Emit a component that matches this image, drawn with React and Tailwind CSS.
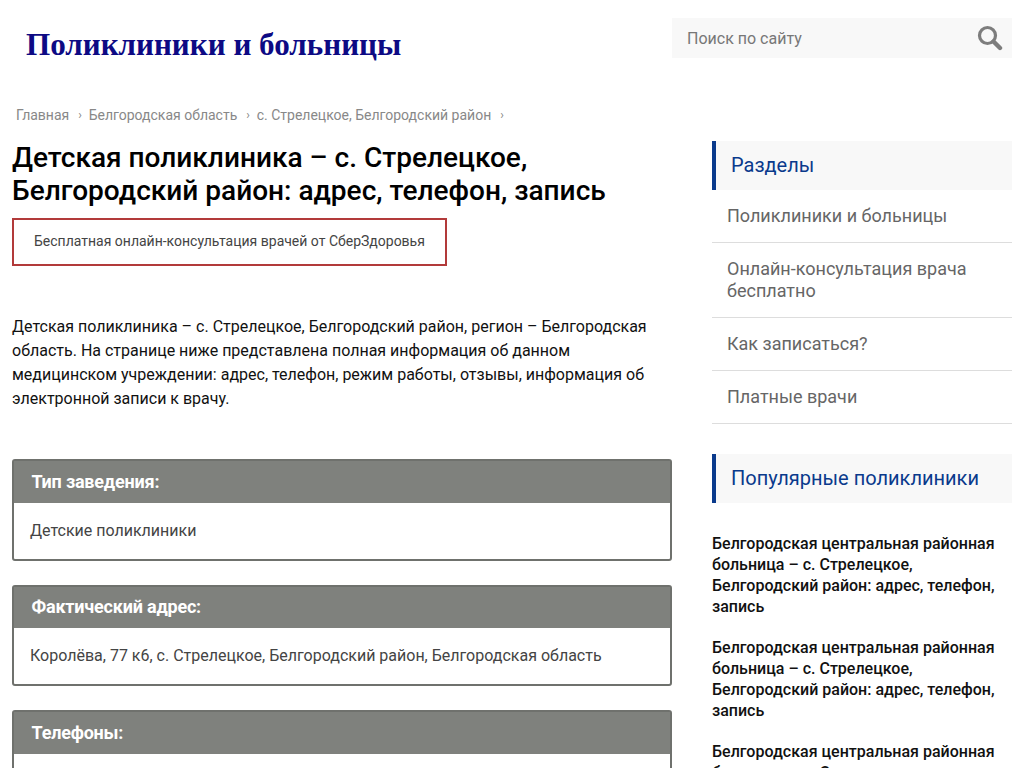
import React from "react";

const sections = ["Поликлиники и больницы", "Онлайн-консультация врача бесплатно", "Как записаться?", "Платные врачи"];
const popular = [
  "Белгородская центральная районная больница – с. Стрелецкое, Белгородский район: адрес, телефон, запись",
  "Белгородская центральная районная больница – с. Стрелецкое, Белгородский район: адрес, телефон, запись",
  "Белгородская центральная районная больница – с. Стрелецкое, Белгородский район: адрес, телефон, запись",
];
const crumbs = ["Главная", "Белгородская область", "с. Стрелецкое, Белгородский район"];

function InfoCard({ title, children }) {
  return (
    <div className="mb-[24px] rounded-[3px] border-2 border-[#6f716d] bg-white">
      <div className="flex h-[41.6px] items-center bg-[#7f817d] pb-[1.4px] pl-[17.5px] text-[18px] font-bold tracking-[-0.2px] text-white">{title}</div>
      <div className="flex h-[56px] items-center pl-[16px] text-[16px] text-[#444]">{children}</div>
    </div>
  );
}

function SideHeading({ children }) {
  return (
    <div className="flex h-[49px] items-center border-l-4 border-[#0a3a8c] bg-[#f8f8f8] pb-[1px] pl-[15px] text-[20px] text-[#0a3a8c]">
      {children}
    </div>
  );
}

export default function App() {
  return (
    <div className="h-screen overflow-hidden bg-white font-['Roboto',sans-serif]">
      <header className="flex items-start justify-between pl-[26px] pr-[12px] pt-[18px]">
        <div className="pt-[8px] font-['Liberation_Serif',serif] text-[31.1px] font-bold leading-[38px] text-[#0d0a84]">
          Поликлиники и больницы
        </div>
        <div className="flex h-[40px] w-[340px] items-center justify-between bg-[#f8f8f8] pl-[15px] pr-[9px]">
          <span className="pt-[1px] text-[16px] text-[#777]">Поиск по сайту</span>
          <svg width="26" height="26" viewBox="0 0 26 26" fill="none" stroke="#7d7d7d">
            <circle cx="10.5" cy="10.5" r="8" strokeWidth="3.2" />
            <path d="M16.5 16.5L23 23" strokeWidth="4.4" strokeLinecap="round" />
          </svg>
        </div>
      </header>

      <nav className="mt-[41px] flex h-[20px] items-center pl-[16px] text-[14px] text-[#888]">
        {crumbs.map((c) => (
          <React.Fragment key={c}>
            <span>{c}</span>
            <span className="ml-[9px] mr-[6.8px] text-[12px]">›</span>
          </React.Fragment>
        ))}
      </nav>

      <div className="mt-[16px] flex justify-between pl-[12px] pr-[12px]">
        <main className="w-[660px]">
          <h1 className="text-[28.05px] font-medium leading-[33px] text-black">
            Детская поликлиника – с. Стрелецкое,
            <br />
            Белгородский район: адрес, телефон, запись
          </h1>
          <div className="mt-[11px] flex h-[48px] w-[435px] items-center border-2 border-[#b23a3a] pb-[2px] pl-[20px] text-[14px] text-[#444]">
            Бесплатная онлайн-консультация врачей от СберЗдоровья
          </div>
          <p className="mt-[49px] text-[16px] leading-[24px] text-[#111]">
            Детская поликлиника – с. Стрелецкое, Белгородский район, регион – Белгородская область. На странице ниже
            представлена полная информация об данном медицинском учреждении: адрес, телефон, режим работы, отзывы,
            информация об электронной записи к врачу.
          </p>
          <div className="mt-[48px]">
            <InfoCard title="Тип заведения:">Детские поликлиники</InfoCard>
            <InfoCard title="Фактический адрес:">Королёва, 77 к6, с. Стрелецкое, Белгородский район, Белгородская область</InfoCard>
            <InfoCard title="Телефоны:">+7 (4722) 38-00-00</InfoCard>
          </div>
        </main>

        <aside className="w-[300px]">
          <SideHeading>Разделы</SideHeading>
          <ul className="mb-[30px]">
            {sections.map((s) => (
              <li key={s} className="border-b border-[#ddd] py-[15px] pl-[15px] pr-[20px] text-[18px] leading-[22px] text-[#666]">
                {s}
              </li>
            ))}
          </ul>
          <SideHeading>Популярные поликлиники</SideHeading>
          <div className="mt-[30px]">
            {popular.map((p, i) => (
              <div key={i} className="mb-[20px] text-[16px] font-medium leading-[21px] text-[#111]">
                {p}
              </div>
            ))}
          </div>
        </aside>
      </div>
    </div>
  );
}
